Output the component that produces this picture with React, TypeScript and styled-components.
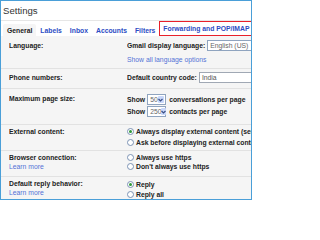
import React from "react";
import styled, { createGlobalStyle } from "styled-components";

const GlobalStyles = createGlobalStyle`
  html, body { margin: 0; padding: 0; background: #fff; }
  * { box-sizing: border-box; }
`;

const Frame = styled.div`
  width: 252px;
  height: 200px;
  overflow: hidden;
  border: 1px solid #4a9fd8;
  background: #f5f5f5;
  font-family: "Liberation Sans", Arial, sans-serif;
  font-size: 6.8px;
  color: #222;
`;

const TitleBar = styled.div`
  height: 20px;
  line-height: 19px;
  padding-left: 2px;
  background: #fff;
  border-bottom: 1px solid #e6e6e6;
  font-size: 9.6px;
  color: #333;
`;

const TabBar = styled.div`
  display: flex;
  align-items: flex-end;
  height: 15px;
  padding-left: 2px;
  background: #fff;
  white-space: nowrap;
`;

const Tab = styled.div<{ $active?: boolean; $marked?: boolean }>`
  height: ${(p) => (p.$marked ? 15 : 12)}px;
  line-height: ${(p) => (p.$marked ? 13 : 11)}px;
  padding: 0 3px;
  border: 1px solid ${(p) => (p.$marked ? "#e8202a" : "transparent")};
  background: ${(p) => (p.$active ? "#f5f5f5" : "transparent")};
  border-radius: ${(p) => (p.$active ? "2px 2px 0 0" : "0")};
  font-weight: bold;
  color: ${(p) => (p.$active ? "#222" : "#2c4cc4")};
`;

const Row = styled.div<{ $pt: number; $pb: number; $first?: boolean }>`
  display: grid;
  grid-template-columns: 118px 1fr;
  padding: ${(p) => p.$pt}px 0 ${(p) => p.$pb}px 8px;
  border-top: 1px solid ${(p) => (p.$first ? "transparent" : "#e2e2e2")};
  white-space: nowrap;
`;

const Column = styled.div`
  display: flex;
  flex-direction: column;
  min-width: 0;
  overflow: hidden;
`;

const Line = styled.div<{ $h: number; $gap?: number }>`
  display: flex;
  align-items: center;
  height: ${(p) => p.$h}px;
  margin-top: ${(p) => p.$gap ?? 0}px;
  font-weight: bold;
  color: #222;
`;

const LinkText = styled.div<{ $h: number; $gap?: number }>`
  height: ${(p) => p.$h}px;
  line-height: ${(p) => p.$h}px;
  margin-top: ${(p) => p.$gap ?? 0}px;
  color: #5473d6;
`;

const Select = styled.div<{ $w: number }>`
  display: flex;
  align-items: center;
  justify-content: space-between;
  flex: none;
  width: ${(p) => p.$w}px;
  height: 11px;
  margin: 0 3px 0 2px;
  padding: 0 1px 0 2px;
  background: #fff;
  border: 1px solid #8fa4bf;
  font-weight: normal;
  color: #666;
`;

const Field = styled.div`
  flex: none;
  width: 80px;
  height: 11px;
  line-height: 9px;
  margin-left: 2px;
  padding-left: 2px;
  background: #fff;
  border: 1px solid #a0a8b4;
  font-weight: normal;
  color: #555;
`;

const ArrowBox = styled.div`
  display: flex;
  align-items: center;
  justify-content: center;
  width: 7px;
  height: 7px;
  background: #c9d8fa;
  border-radius: 1px;
`;

const Radio = styled.span<{ $on?: boolean }>`
  position: relative;
  flex: none;
  width: 7px;
  height: 7px;
  margin-right: 2px;
  border: 1px solid #7c93b4;
  border-radius: 50%;
  background: #fff;
  &::after {
    content: "";
    display: ${(p) => (p.$on ? "block" : "none")};
    position: absolute;
    left: 1px;
    top: 1px;
    width: 3px;
    height: 3px;
    border-radius: 50%;
    background: #2f9a3a;
  }
`;

const Arrow = () => (
  <ArrowBox>
    <svg width="5" height="4" viewBox="0 0 5 4">
      <path d="M0.5 1 L2.5 3 L4.5 1" fill="none" stroke="#3a4f86" strokeWidth="1.2" />
    </svg>
  </ArrowBox>
);

const tabs = ["General", "Labels", "Inbox", "Accounts", "Filters", "Forwarding and POP/IMAP"];

export default function App() {
  return (
    <>
      <GlobalStyles />
      <Frame>
        <TitleBar>Settings</TitleBar>
        <TabBar>
          {tabs.map((t, i) => (
            <Tab key={t} $active={i === 0} $marked={i === tabs.length - 1}>
              {t}
            </Tab>
          ))}
        </TabBar>

        <Row $first $pt={2} $pb={4}>
          <Column>
            <Line $h={12}>Language:</Line>
          </Column>
          <Column>
            <Line $h={12}>
              Gmail display language:
              <Select $w={60}>English (US)</Select>
            </Line>
            <LinkText $h={9} $gap={4}>Show all language options</LinkText>
          </Column>
        </Row>

        <Row $pt={3} $pb={5}>
          <Column>
            <Line $h={11}>Phone numbers:</Line>
          </Column>
          <Column>
            <Line $h={11}>
              Default country code:
              <Field>India</Field>
            </Line>
          </Column>
        </Row>

        <Row $pt={4} $pb={7}>
          <Column>
            <Line $h={11}>Maximum page size:</Line>
          </Column>
          <Column>
            <Line $h={11} $gap={1}>
              Show
              <Select $w={19}>
                50
                <Arrow />
              </Select>
              conversations per page
            </Line>
            <Line $h={11} $gap={1}>
              Show
              <Select $w={19}>
                250
                <Arrow />
              </Select>
              contacts per page
            </Line>
          </Column>
        </Row>

        <Row $pt={1} $pb={2}>
          <Column>
            <Line $h={11}>External content:</Line>
          </Column>
          <Column>
            <Line $h={11}>
              <Radio $on />
              Always display external content (sent by trusted senders)
            </Line>
            <Line $h={11}>
              <Radio />
              Ask before displaying external content
            </Line>
          </Column>
        </Row>

        <Row $pt={2} $pb={5}>
          <Column>
            <Line $h={9}>Browser connection:</Line>
            <LinkText $h={9}>Learn more</LinkText>
          </Column>
          <Column>
            <Line $h={9}>
              <Radio />
              Always use https
            </Line>
            <Line $h={9}>
              <Radio />
              Don't always use https
            </Line>
          </Column>
        </Row>

        <Row $pt={2} $pb={0}>
          <Column>
            <Line $h={9}>Default reply behavior:</Line>
            <LinkText $h={9}>Learn more</LinkText>
          </Column>
          <Column>
            <Line $h={10}>
              <Radio $on />
              Reply
            </Line>
            <Line $h={10}>
              <Radio />
              Reply all
            </Line>
          </Column>
        </Row>
      </Frame>
    </>
  );
}
